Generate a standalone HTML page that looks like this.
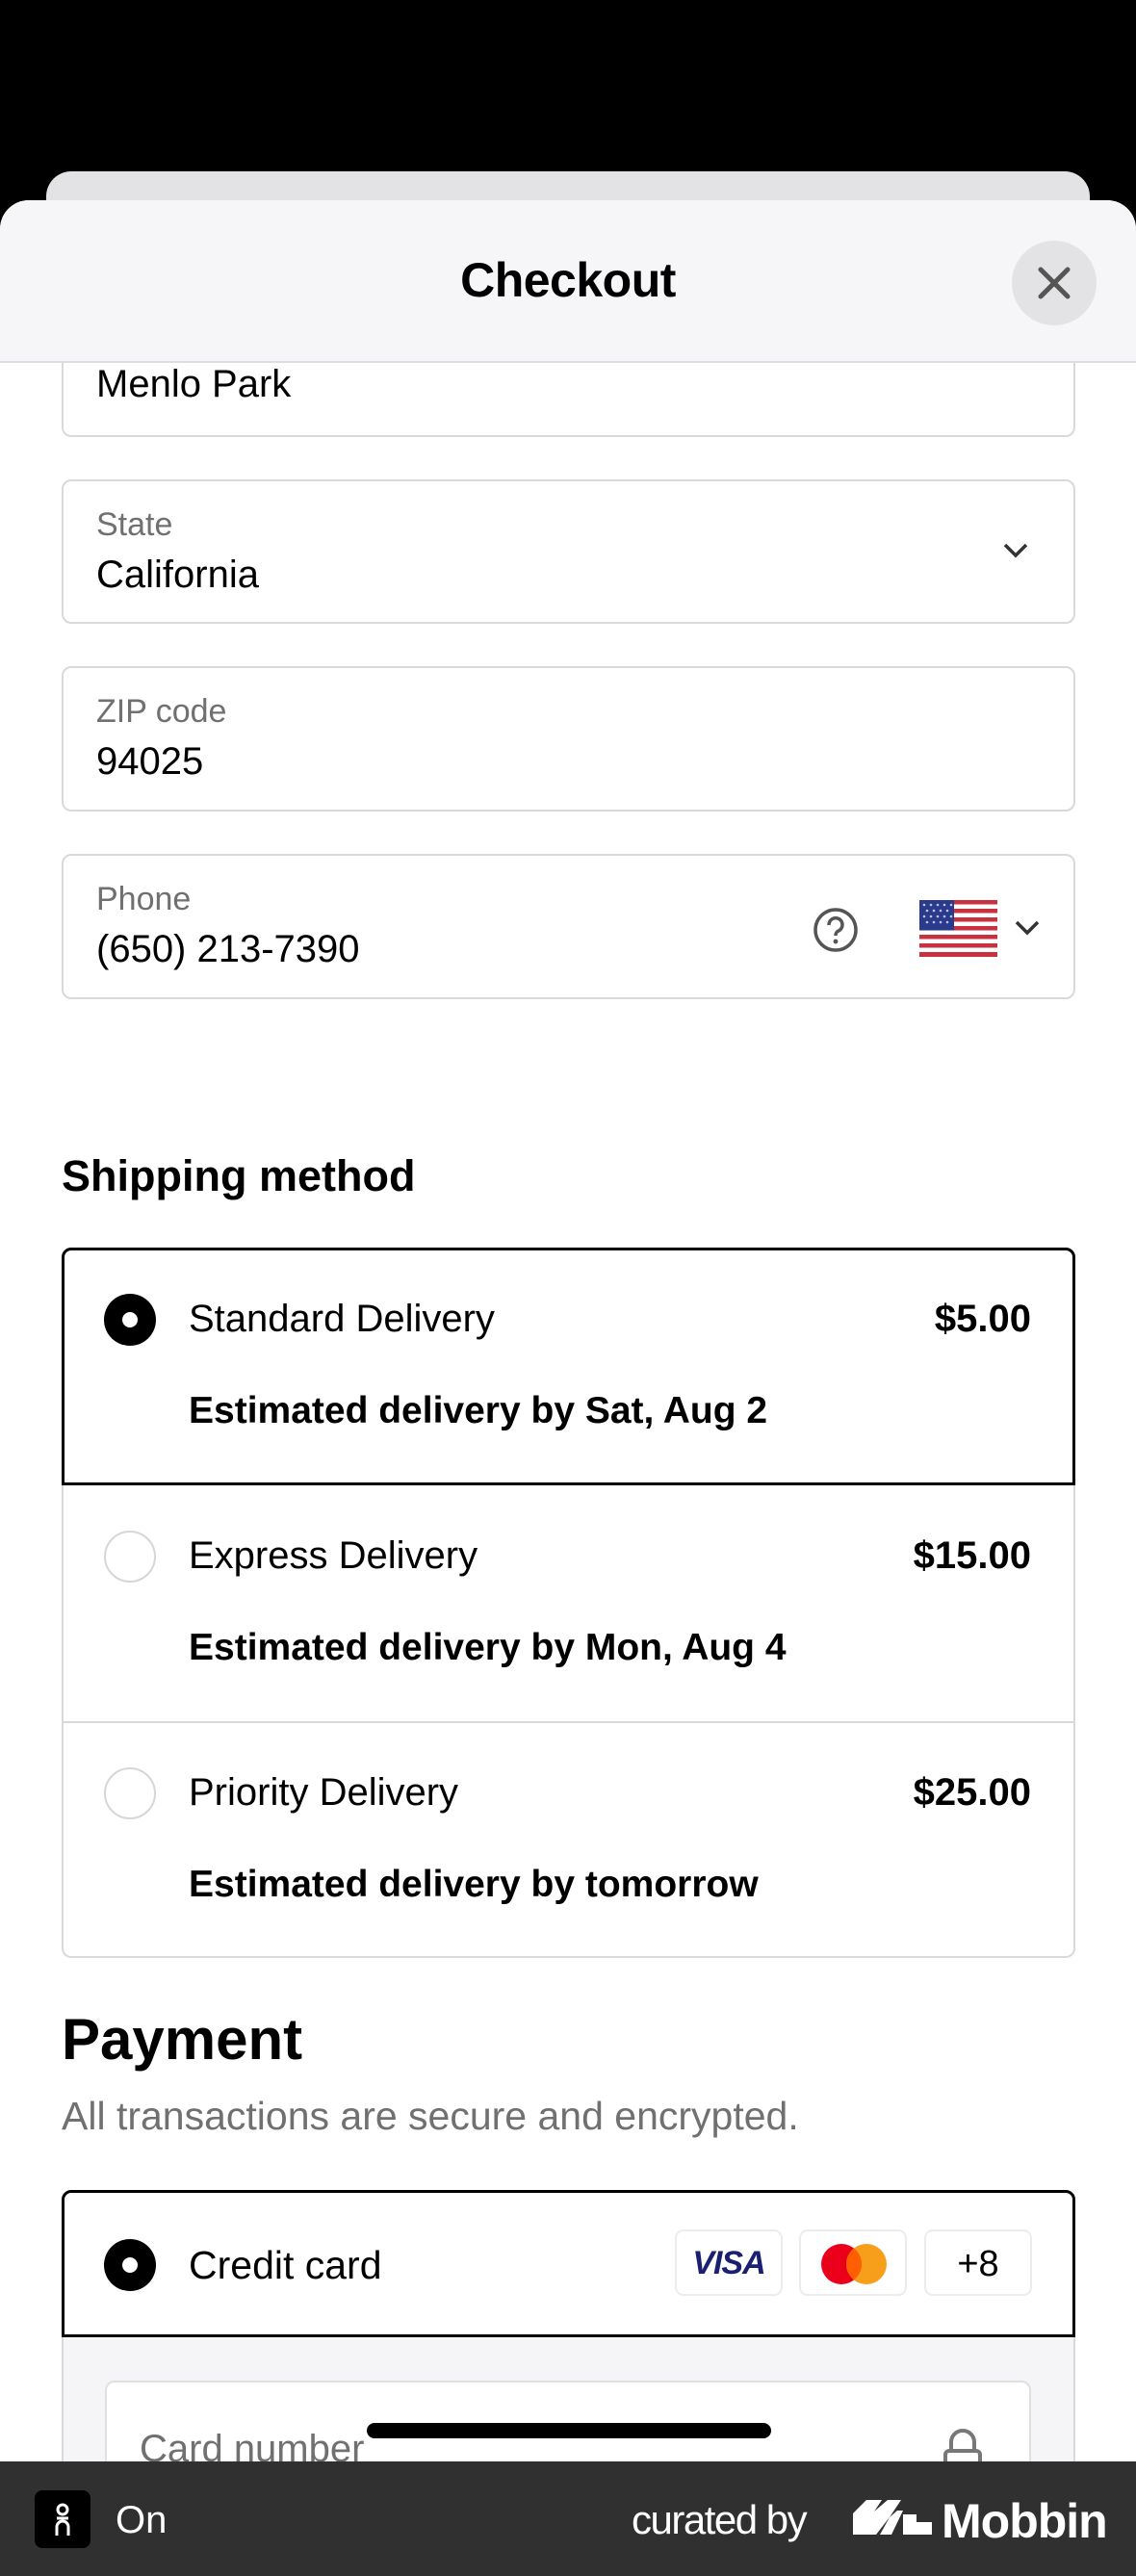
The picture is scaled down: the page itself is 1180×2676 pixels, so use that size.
<!DOCTYPE html>
<html><head><meta charset="utf-8"><style>
*{margin:0;padding:0;box-sizing:border-box}
html,body{width:1180px;height:2676px;overflow:hidden}
body{position:relative;background:#000;font-family:"Liberation Sans",Arial,sans-serif;color:#000}
.a{position:absolute}
.field{position:absolute;left:64px;width:1053px;border:2px solid #d9d9d9;border-radius:10px;background:#fff}
.lbl{position:absolute;left:34px;font-size:34px;color:#707070}
.val{position:absolute;left:34px;font-size:40px;color:#000}
.radio{position:absolute;width:54px;height:54px;border-radius:50%}
.on{background:#000}
.on::after{content:"";position:absolute;left:19px;top:19px;width:16px;height:16px;border-radius:50%;background:#fff}
.off{border:2px solid #d6d6d6;background:#fff}
.t{position:absolute;font-size:40px;white-space:nowrap}
.b{font-weight:bold}
.chip{position:absolute;top:2316px;height:69px;width:112px;border:2px solid #ececec;border-radius:9px;background:#fff}
</style></head><body>
<div class="a" style="left:48px;top:178px;width:1084px;height:120px;background:#e3e3e6;border-radius:26px 26px 0 0"></div>
<div class="a" style="left:0;top:208px;width:1180px;height:2468px;background:#fff;border-radius:30px 30px 0 0;overflow:hidden">
  <div class="a" style="left:0;top:0;width:1180px;height:169px;background:#f6f6f8;border-bottom:2px solid #dedede"></div>
</div>
<div class="a" style="left:0;top:262px;width:1180px;text-align:center;font-size:50px;font-weight:bold;letter-spacing:-0.5px">Checkout</div>
<div class="a" style="left:1051px;top:250px;width:88px;height:88px;border-radius:50%;background:#e3e3e5"></div>
<svg class="a" style="left:1075px;top:274px" width="40" height="40" viewBox="0 0 40 40"><path d="M6 6L34 34M34 6L6 34" stroke="#555" stroke-width="5" stroke-linecap="round"/></svg>

<div class="field" style="top:377px;height:77px;border-top:none;border-radius:0 0 10px 10px"><div class="val" style="top:0px">Menlo Park</div></div>
<div class="field" style="top:498px;height:150px"><div class="lbl" style="top:26px">State</div><div class="val" style="top:75px">California</div>
<svg class="a" style="left:974px;top:62px" width="30" height="20" viewBox="0 0 30 20"><path d="M4 4L15 15L26 4" fill="none" stroke="#333" stroke-width="3.5"/></svg></div>
<div class="field" style="top:692px;height:151px"><div class="lbl" style="top:26px">ZIP code</div><div class="val" style="top:75px">94025</div></div>
<div class="field" style="top:887px;height:151px"><div class="lbl" style="top:26px">Phone</div><div class="val" style="top:75px">(650) 213-7390</div>
<svg class="a" style="left:777px;top:52px" width="50" height="50" viewBox="0 0 50 50"><circle cx="25" cy="25" r="21" fill="none" stroke="#555" stroke-width="3.5"/><path d="M18 20a7 7 0 1 1 10 6c-2 1-3 2-3 5" fill="none" stroke="#555" stroke-width="3.5"/><circle cx="25" cy="37" r="2.4" fill="#555"/></svg>
<svg class="a" style="left:889px;top:46px" width="81" height="59" viewBox="0 0 81 59"><rect width="81" height="59" fill="#fff"/><g fill="#c8313e"><rect y="0" width="81" height="4.5"/><rect y="9" width="81" height="4.5"/><rect y="18" width="81" height="4.5"/><rect y="27" width="81" height="4.5"/><rect y="36" width="81" height="4.5"/><rect y="45" width="81" height="4.5"/><rect y="54" width="81" height="5"/></g><rect width="36" height="31.5" fill="#2a3a8c"/><g fill="#fff" opacity=".7"><circle cx="5" cy="5" r="1.3"/><circle cx="12" cy="5" r="1.3"/><circle cx="19" cy="5" r="1.3"/><circle cx="26" cy="5" r="1.3"/><circle cx="33" cy="5" r="1.3"/><circle cx="8" cy="11" r="1.3"/><circle cx="15" cy="11" r="1.3"/><circle cx="22" cy="11" r="1.3"/><circle cx="29" cy="11" r="1.3"/><circle cx="5" cy="17" r="1.3"/><circle cx="12" cy="17" r="1.3"/><circle cx="19" cy="17" r="1.3"/><circle cx="26" cy="17" r="1.3"/><circle cx="33" cy="17" r="1.3"/><circle cx="8" cy="23" r="1.3"/><circle cx="15" cy="23" r="1.3"/><circle cx="22" cy="23" r="1.3"/><circle cx="29" cy="23" r="1.3"/></g></svg>
<svg class="a" style="left:986px;top:65px" width="30" height="20" viewBox="0 0 30 20"><path d="M4 4L15 15L26 4" fill="none" stroke="#333" stroke-width="3.5"/></svg></div>

<div class="t b" style="left:64px;top:1196px;font-size:45px">Shipping method</div>
<div class="a" style="left:64px;top:1296px;width:1053px;height:738px;border:2px solid #d9d9d9;border-radius:10px;background:#fff"></div>
<div class="a" style="left:64px;top:1296px;width:1053px;height:247px;border:3px solid #000;border-radius:10px 10px 0 0"></div>
<div class="a" style="left:66px;top:1788px;width:1049px;height:2px;background:#d9d9d9"></div>
<div class="radio on" style="left:108px;top:1344px"></div>
<div class="t" style="left:196px;top:1348px">Standard Delivery</div>
<div class="t b" style="right:109px;top:1348px">$5.00</div>
<div class="t b" style="left:196px;top:1444px;font-size:39px">Estimated delivery by Sat, Aug 2</div>
<div class="radio off" style="left:108px;top:1590px"></div>
<div class="t" style="left:196px;top:1594px">Express Delivery</div>
<div class="t b" style="right:109px;top:1594px">$15.00</div>
<div class="t b" style="left:196px;top:1690px;font-size:39px">Estimated delivery by Mon, Aug 4</div>
<div class="radio off" style="left:108px;top:1836px"></div>
<div class="t" style="left:196px;top:1840px">Priority Delivery</div>
<div class="t b" style="right:109px;top:1840px">$25.00</div>
<div class="t b" style="left:196px;top:1936px;font-size:39px">Estimated delivery by tomorrow</div>

<div class="t b" style="left:64px;top:2084px;font-size:60px">Payment</div>
<div class="t" style="left:64px;top:2175px;font-size:41px;color:#707070">All transactions are secure and encrypted.</div>

<div class="a" style="left:64px;top:2427px;width:1053px;height:249px;background:#f5f5f7;border-left:2px solid #d9d9d9;border-right:2px solid #d9d9d9"></div>
<div class="a" style="left:64px;top:2275px;width:1053px;height:153px;border:3px solid #000;border-radius:10px 10px 0 0;background:#fff"></div>
<div class="radio on" style="left:108px;top:2326px"></div>
<div class="t" style="left:196px;top:2330px;font-size:41px">Credit card</div>
<div class="chip" style="left:701px"><div class="a" style="left:0;width:108px;top:14px;text-align:center;font-size:34px;font-weight:bold;font-style:italic;color:#1a1f71;letter-spacing:-1px">VISA</div></div>
<div class="chip" style="left:830px"><svg class="a" style="left:20px;top:12px" width="70" height="44" viewBox="0 0 70 44"><circle cx="22" cy="22" r="21" fill="#eb001b"/><circle cx="48" cy="22" r="21" fill="#f79e1b"/><path d="M35 5.5a21 21 0 0 1 0 33a21 21 0 0 1 0-33z" fill="#ff5f00"/></svg></div>
<div class="chip" style="left:960px"><div class="a" style="left:0;width:108px;top:13px;text-align:center;font-size:38px">+8</div></div>

<div class="a" style="left:109px;top:2473px;width:962px;height:120px;background:#fff;border:2px solid #e0e0e0;border-radius:10px"></div>
<div class="t" style="left:145px;top:2522px;font-size:40px;color:#707070">Card number</div>
<svg class="a" style="left:978px;top:2522px" width="44" height="50" viewBox="0 0 44 50"><path d="M10 24V15a12 12 0 0 1 24 0v9" fill="none" stroke="#777" stroke-width="4"/><rect x="4" y="24" width="36" height="26" rx="4" fill="none" stroke="#777" stroke-width="4"/></svg>
<div class="a" style="left:381px;top:2517px;width:420px;height:16px;border-radius:8px;background:#000"></div>

<div class="a" style="left:0;top:2557px;width:1180px;height:119px;background:#303030"></div>
<div class="a" style="left:36px;top:2587px;width:58px;height:60px;border-radius:8px;background:#000"></div>
<svg class="a" style="left:55px;top:2598px" width="20" height="38" viewBox="0 0 20 38"><circle cx="10" cy="9" r="5" fill="none" stroke="#fff" stroke-width="3"/><path d="M4 18h12M4 36V27a6 6 0 0 1 12 0v9" fill="none" stroke="#fff" stroke-width="3"/></svg>
<div class="a" style="left:120px;top:2596px;font-size:40px;color:#fff">On</div>
<div class="a" style="left:656px;top:2594px;font-size:42px;color:#fff;letter-spacing:-1.5px">curated by</div>
<svg class="a" style="left:886px;top:2595px" width="82" height="40" viewBox="0 0 82 40"><path d="M0 16L14 2H30L22 14L36 2H50L38 20L46 13H52L40 38H28L38 20L24 38H0Z" fill="#fff"/><path d="M52 17H66V25H82V38H52Z" fill="#fff"/></svg>
<div class="a" style="left:978px;top:2590px;font-size:50px;font-weight:bold;color:#fff;letter-spacing:-1px">Mobbin</div>
</body></html>
